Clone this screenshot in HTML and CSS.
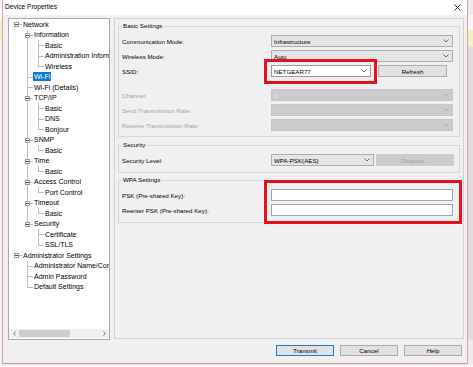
FILE: index.html
```html
<!DOCTYPE html>
<html>
<head>
<meta charset="utf-8">
<title>Device Properties</title>
<link rel="stylesheet" href="styles.css">
</head>
<body>
<div class="edge-left"></div>
<div class="win">
  <div class="titlebar">
    <span class="title">Device Properties</span>
    <svg class="close" width="7" height="7" viewBox="0 0 7 7"><path d="M0.5 0.5L6.5 6.5M6.5 0.5L0.5 6.5" stroke="#222" stroke-width="0.9" fill="none"/></svg>
  </div>
  <div class="client">
    <div class="main">
      <div class="tree">
        <div class="items">
          <div class="n"><i class="c r0"><b class="x"></b></i><span class="lb">Network</span></div>
          <div class="n"><i class="c"></i><i class="c te"><b class="x"></b></i><span class="lb">Information</span></div>
          <div class="n"><i class="c"></i><i class="c v"></i><i class="c te"></i><span class="lb">Basic</span></div>
          <div class="n"><i class="c"></i><i class="c v"></i><i class="c te"></i><span class="lb">Administration Information</span></div>
          <div class="n"><i class="c"></i><i class="c v"></i><i class="c l"></i><span class="lb">Wireless</span></div>
          <div class="n"><i class="c"></i><i class="c te"></i><span class="lb sel">Wi-Fi</span></div>
          <div class="n"><i class="c"></i><i class="c te"></i><span class="lb">Wi-Fi (Details)</span></div>
          <div class="n"><i class="c"></i><i class="c te"><b class="x"></b></i><span class="lb">TCP/IP</span></div>
          <div class="n"><i class="c"></i><i class="c v"></i><i class="c te"></i><span class="lb">Basic</span></div>
          <div class="n"><i class="c"></i><i class="c v"></i><i class="c te"></i><span class="lb">DNS</span></div>
          <div class="n"><i class="c"></i><i class="c v"></i><i class="c l"></i><span class="lb">Bonjour</span></div>
          <div class="n"><i class="c"></i><i class="c te"><b class="x"></b></i><span class="lb">SNMP</span></div>
          <div class="n"><i class="c"></i><i class="c v"></i><i class="c l"></i><span class="lb">Basic</span></div>
          <div class="n"><i class="c"></i><i class="c te"><b class="x"></b></i><span class="lb">Time</span></div>
          <div class="n"><i class="c"></i><i class="c v"></i><i class="c l"></i><span class="lb">Basic</span></div>
          <div class="n"><i class="c"></i><i class="c te"><b class="x"></b></i><span class="lb">Access Control</span></div>
          <div class="n"><i class="c"></i><i class="c v"></i><i class="c l"></i><span class="lb">Port Control</span></div>
          <div class="n"><i class="c"></i><i class="c te"><b class="x"></b></i><span class="lb">Timeout</span></div>
          <div class="n"><i class="c"></i><i class="c v"></i><i class="c l"></i><span class="lb">Basic</span></div>
          <div class="n"><i class="c"></i><i class="c l"><b class="x"></b></i><span class="lb">Security</span></div>
          <div class="n"><i class="c"></i><i class="c"></i><i class="c te"></i><span class="lb">Certificate</span></div>
          <div class="n"><i class="c"></i><i class="c"></i><i class="c l"></i><span class="lb">SSL/TLS</span></div>
          <div class="n"><i class="c r0"><b class="x"></b></i><span class="lb">Administrator Settings</span></div>
          <div class="n"><i class="c"></i><i class="c te"></i><span class="lb">Administrator Name/Community</span></div>
          <div class="n"><i class="c"></i><i class="c te"></i><span class="lb">Admin Password</span></div>
          <div class="n"><i class="c"></i><i class="c l"></i><span class="lb">Default Settings</span></div>
        </div>
        <div class="hscroll">
          <span class="arr"><svg width="3" height="5" viewBox="0 0 3 5"><path d="M2.5 0.5L0.7 2.5L2.5 4.5" fill="none" stroke="#606060" stroke-width="0.9"/></svg></span>
          <span class="thumb"></span>
          <span class="track"></span>
          <span class="arr"><svg width="3" height="5" viewBox="0 0 3 5"><path d="M0.5 0.5L2.3 2.5L0.5 4.5" fill="none" stroke="#606060" stroke-width="0.9"/></svg></span>
        </div>
      </div>

      <div class="panel">
        <fieldset class="grp grp-basic">
          <legend>Basic Settings</legend>
          <div class="row">
            <span class="lbl">Communication Mode:</span>
            <div class="cb grow"><span class="val">Infrastructure</span><svg class="dd" width="6" height="4" viewBox="0 0 6 4"><path d="M0.5 0.5L3 3L5.5 0.5" fill="none" stroke="currentColor" stroke-width="0.9"/></svg></div>
          </div>
          <div class="row">
            <span class="lbl">Wireless Mode:</span>
            <div class="cb grow"><span class="val">Auto</span><svg class="dd" width="6" height="4" viewBox="0 0 6 4"><path d="M0.5 0.5L3 3L5.5 0.5" fill="none" stroke="currentColor" stroke-width="0.9"/></svg></div>
          </div>
          <div class="row gap">
            <span class="lbl">SSID:</span>
            <div class="hl hl-ssid">
              <div class="cb edit ssid"><span class="val">NETGEAR77</span><svg class="dd" width="6" height="4" viewBox="0 0 6 4"><path d="M0.5 0.5L3 3L5.5 0.5" fill="none" stroke="currentColor" stroke-width="0.9"/></svg></div>
            </div>
            <div class="btn refresh">Refresh</div>
          </div>
          <div class="row dis">
            <span class="lbl">Channel:</span>
            <div class="cb grow off"><span class="val">1</span><svg class="dd" width="6" height="4" viewBox="0 0 6 4"><path d="M0.5 0.5L3 3L5.5 0.5" fill="none" stroke="currentColor" stroke-width="0.9"/></svg></div>
          </div>
          <div class="row dis">
            <span class="lbl">Send Transmission Rate:</span>
            <div class="cb grow off"><span class="val"></span><svg class="dd" width="6" height="4" viewBox="0 0 6 4"><path d="M0.5 0.5L3 3L5.5 0.5" fill="none" stroke="currentColor" stroke-width="0.9"/></svg></div>
          </div>
          <div class="row dis last">
            <span class="lbl">Receive Transmission Rate:</span>
            <div class="cb grow off"><span class="val"></span><svg class="dd" width="6" height="4" viewBox="0 0 6 4"><path d="M0.5 0.5L3 3L5.5 0.5" fill="none" stroke="currentColor" stroke-width="0.9"/></svg></div>
          </div>
        </fieldset>

        <fieldset class="grp grp-sec">
          <legend>Security</legend>
          <div class="row last">
            <span class="lbl">Security Level:</span>
            <div class="cb sec"><span class="val">WPA-PSK(AES)</span><svg class="dd" width="6" height="4" viewBox="0 0 6 4"><path d="M0.5 0.5L3 3L5.5 0.5" fill="none" stroke="currentColor" stroke-width="0.9"/></svg></div>
            <div class="btn detailed">Detailed...</div>
          </div>
        </fieldset>

        <fieldset class="grp grp-wpa">
          <legend>WPA Settings</legend>
          <div class="wpa-rows">
            <div class="row">
              <span class="lbl">PSK (Pre-shared Key):</span>
              <div class="txt grow"></div>
            </div>
            <div class="row last">
              <span class="lbl">Reenter PSK (Pre-shared Key):</span>
              <div class="txt grow"></div>
            </div>
          </div>
        </fieldset>
      </div>
    </div>

    <div class="buttons">
      <div class="btn foot default">Transmit</div>
      <div class="btn foot">Cancel</div>
      <div class="btn foot">Help</div>
    </div>
  </div>
</div>
<div class="edge-right"></div>
</body>
</html>
```

FILE: styles.css
```css
* { box-sizing: border-box; }

html, body {
  margin: 0;
  padding: 0;
}

body {
  width: 473px;
  height: 367px;
  overflow: hidden;
  display: flex;
  align-items: flex-start;
  background: #f8f8f8;
  font-family: "Liberation Sans", Arial, sans-serif;
  color: #000;
}

.edge-left {
  flex: none;
  width: 2px;
  height: 364px;
  background: linear-gradient(to bottom, #fbfbfb 0 20px, #f4efc6 20px 40px, #f6f1f1 40px);
}

.edge-right {
  flex: none;
  width: 5px;
  height: 364px;
  background: linear-gradient(to bottom, #ececec 0 14px, #f6f6f6 14px 30px, #f4efc4 30px 47px, #dedede 47px 340px, #ebebeb 340px);
}

.win {
  flex: none;
  width: 466px;
  height: 364px;
  display: flex;
  flex-direction: column;
  border-left: 1px solid #d8a4a4;
  border-right: 1px solid #d8a4a4;
  border-bottom: 1px solid #d39a9a;
  box-shadow: 0 1px 1px rgba(0, 0, 0, 0.06);
}

/* title bar */
.titlebar {
  flex: none;
  height: 15px;
  background: #ffffff;
  display: flex;
  align-items: center;
  justify-content: space-between;
  padding: 0 6px 1px 2px;
}

.title {
  font-size: 6.6px;
  line-height: 8px;
}

.close { display: block; }

/* client area */
.client {
  flex: 1;
  background: #f0f0f0;
  padding: 3px 3px 0 5px;
  display: flex;
  flex-direction: column;
}

.main {
  display: flex;
  align-items: flex-start;
  gap: 4px;
}

/* tree */
.tree {
  flex: none;
  width: 102px;
  height: 322px;
  border: 1px solid #a8a8a8;
  background: #ffffff;
  display: flex;
  flex-direction: column;
  overflow: hidden;
}

.items {
  flex: 1;
  padding-left: 2px;
  overflow: hidden;
  font-size: 7px;
}

.n {
  height: 10.5px;
  display: flex;
  align-items: stretch;
  white-space: nowrap;
}

.c {
  position: relative;
  flex: none;
  width: 11px;
  font-style: normal;
}

.c.v::before,
.c.te::before {
  content: "";
  position: absolute;
  left: 5px;
  top: 0;
  bottom: 0;
  width: 1px;
  background: #bcbcbc;
}

.c.l::before {
  content: "";
  position: absolute;
  left: 5px;
  top: 0;
  height: 6px;
  width: 1px;
  background: #bcbcbc;
}

.c.te::after,
.c.l::after,
.c.r0::after {
  content: "";
  position: absolute;
  left: 5px;
  right: 0;
  top: 5px;
  height: 1px;
  background: #bcbcbc;
}

.x {
  position: absolute;
  z-index: 1;
  left: 3px;
  top: 3px;
  width: 5px;
  height: 5px;
  border: 1px solid #9c9c9c;
  background: #ffffff;
}

.x::after {
  content: "";
  position: absolute;
  left: 0;
  top: 1px;
  width: 3px;
  height: 1px;
  background: #4a4a4a;
}

.lb {
  align-self: center;
  margin-left: 1px;
  line-height: 9px;
}

.lb.sel {
  margin-left: 0;
  padding: 0 1px;
  background: #0a78d4;
  color: #ffffff;
}

.hscroll {
  flex: none;
  height: 9px;
  margin-bottom: 1px;
  background: #f0f0f0;
  display: flex;
  align-items: center;
}

.arr {
  flex: none;
  width: 10px;
  height: 9px;
  display: flex;
  align-items: center;
  justify-content: center;
}

.arr svg { display: block; }

.thumb {
  flex: none;
  width: 51px;
  height: 7px;
  background: #cdcdcd;
}

.track { flex: 1; }

/* right panel */
.panel {
  flex: none;
  width: 350px;
  height: 321px;
  border: 1px solid #d2d2d2;
  padding: 3px 3px 0 3px;
  font-size: 6.2px;
}

.grp {
  margin: 0;
  min-width: 0;
  border: 1px solid #d7d7d7;
  padding: 5px 6px 5px 3px;
}

.grp legend {
  padding: 0 1px;
  line-height: 8px;
  font-size: 6.2px;
}

.grp-sec {
  margin-top: 4px;
  padding-bottom: 6px;
}

.grp-wpa {
  margin-top: 3px;
  padding-bottom: 6px;
}

.row {
  height: 12px;
  display: flex;
  align-items: center;
  margin-bottom: 3px;
}

.row.gap { margin-bottom: 12px; }
.row.last { margin-bottom: 0; }

.lbl {
  flex: none;
  width: 149px;
  white-space: nowrap;
}

.row.dis .lbl { color: #a3a3a3; }

.grow { flex: 1; }

.cb {
  height: 12px;
  border: 1px solid #adadad;
  background: #e5e5e5;
  display: flex;
  align-items: center;
  padding-left: 2px;
  color: #000;
}

.cb .val {
  flex: 1;
  white-space: nowrap;
  overflow: hidden;
}

.cb .dd {
  flex: none;
  display: block;
  margin-right: 3px;
  color: #5a5a5a;
}

.cb.edit {
  background: #ffffff;
  border-color: #9a9a9a;
}

.cb.off {
  background: #cccccc;
  border-color: #c6c6c6;
  color: #ebebeb;
}

.cb.off .dd { color: #a8a8a8; }

.ssid { width: 100px; }
.sec { flex: none; width: 103px; }

.hl { position: relative; flex: none; }

.hl-ssid::after {
  content: "";
  position: absolute;
  left: -7px;
  right: -6px;
  top: -6px;
  bottom: -7px;
  border: 3px solid #e5121d;
  pointer-events: none;
}

.txt {
  height: 12px;
  border: 1px solid #a3a3a3;
  background: #ffffff;
}

.wpa-rows { position: relative; }

.wpa-rows::after {
  content: "";
  position: absolute;
  left: 142px;
  right: -9px;
  top: -9px;
  bottom: -8px;
  border: 3px solid #e5121d;
  pointer-events: none;
}

/* buttons */
.btn {
  flex: none;
  height: 12px;
  border: 1px solid #adadad;
  background: #e1e1e1;
  display: flex;
  align-items: center;
  justify-content: center;
  white-space: nowrap;
  font-size: 6.2px;
}

.refresh {
  width: 69px;
  margin-left: 7px;
}

.detailed {
  width: 78px;
  margin-left: 2px;
  background: #cccccc;
  border-color: #cccccc;
  color: #a6a6a6;
}

.buttons {
  display: flex;
  justify-content: flex-end;
  gap: 6px;
  margin-top: 5px;
  margin-right: 2px;
}

.btn.foot {
  width: 58px;
  height: 11px;
}

.btn.default {
  border-color: #1a7ad6;
}
```
